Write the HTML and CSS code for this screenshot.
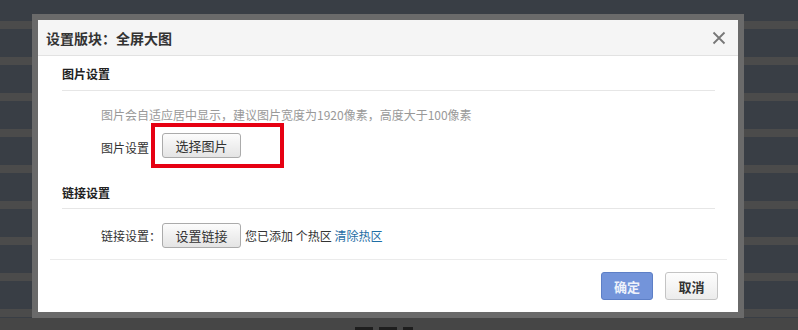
FILE: index.html
```html
<!DOCTYPE html>
<html lang="zh-CN">
<head>
    <meta charset="UTF-8">
    <meta name="viewport" content="width=device-width, initial-scale=1.0">
    <title>设置版块：全屏大图</title>
    <link rel="stylesheet" href="styles.css">
</head>
<body>
    <div class="frame">
        <div class="dialog">
            <div class="dlg-head">
                <span class="dlg-title">设置版块：全屏大图</span>
                <svg class="close" width="14" height="14" viewBox="0 0 14 14">
                    <path d="M1.5 1.5 L12.5 12.5 M12.5 1.5 L1.5 12.5" stroke="#777" stroke-width="1.8" fill="none"/>
                </svg>
            </div>

            <div class="section-title">图片设置</div>
            <div class="hint">图片会自适应居中显示，建议图片宽度为1920像素，高度大于100像素</div>
            <div class="row">
                <span class="label">图片设置</span>
                <span class="mark"><button class="btn">选择图片</button></span>
            </div>

            <div class="section-title second">链接设置</div>
            <div class="row row-link">
                <span class="label">链接设置：</span>
                <button class="btn">设置链接</button>
                <span class="note">您已添加 个热区 <a class="link" href="#">清除热区</a></span>
            </div>

            <div class="dlg-foot">
                <button class="btn-ok">确定</button>
                <button class="btn-cancel">取消</button>
            </div>
        </div>
    </div>
    <div class="bottom-band">
        <span class="peek"></span><span class="peek"></span><span class="peek small"></span>
    </div>
</body>
</html>
```

FILE: styles.css
```css
html {
    overflow: hidden;
}
body {
    margin: 0;
    width: 798px;
    height: 330px;
    overflow: hidden;
    font-family: "Noto Sans CJK SC", "Liberation Sans", sans-serif;
    font-size: 12px;
    color: #333;
    background-color: #393e45;
    background-image: repeating-linear-gradient(to bottom, transparent 0, transparent 21px, #4b4b4b 21px, #4b4b4b 29px, transparent 29px, transparent 36px);
    padding-top: 14px;
    box-sizing: border-box;
}
.frame {
    width: 700px;
    margin-left: 32px;
    border: 6px solid #6a6a6a;
}
.dialog {
    background-color: #fff;
    height: 292px;
}
.dlg-head {
    height: 35px;
    background-color: #f5f5f5;
    border-bottom: 1px solid #e2e2e2;
    display: flex;
    align-items: center;
    justify-content: space-between;
    padding: 0 12px 0 8px;
}
.dlg-title {
    font-size: 14px;
    font-weight: bold;
    color: #333;
    line-height: 20px;
}
.close {
    display: block;
    margin-top: 1px;
}
.section-title {
    margin: 6px 23px 0 24px;
    line-height: 24px;
    padding-bottom: 4px;
    font-weight: bold;
    color: #222;
    border-bottom: 1px solid #e6e6e6;
}
.section-title.second {
    margin-top: 23px;
    padding-bottom: 3px;
}
.hint {
    margin: 14px 0 0 63px;
    line-height: 20px;
    color: #999;
}
.row {
    display: flex;
    align-items: center;
    margin: 8px 0 0 63px;
    height: 25px;
}
.row-link {
    margin-top: 14px;
}
.label {
    width: 61px;
    line-height: 25px;
    padding-top: 3px;
}
.row-link .label {
    padding-top: 0;
}
.mark {
    position: relative;
    display: inline-block;
}
.mark::after {
    content: "";
    position: absolute;
    left: -11px;
    top: -10px;
    width: 125px;
    height: 37px;
    border: 4px solid #e60012;
}
.btn {
    width: 79px;
    height: 25px;
    border: 1px solid #ababab;
    border-radius: 3px;
    background: linear-gradient(to bottom, #fcfcfc, #e4e4e4);
    font-family: inherit;
    font-size: 13px;
    color: #333;
    padding: 0;
    cursor: pointer;
}
.note {
    margin-left: 4px;
    color: #333;
}
.link {
    color: #1f6ea5;
    text-decoration: none;
}
.dlg-foot {
    margin: 11px 11px 0 12px;
    border-top: 1px solid #ebebeb;
    padding: 12px 9px 0 0;
    display: flex;
    justify-content: flex-end;
    gap: 12px;
}
.btn-ok, .btn-cancel {
    height: 28px;
    border-radius: 3px;
    font-family: inherit;
    font-size: 13px;
    font-weight: bold;
    padding: 0;
    cursor: pointer;
}
.btn-ok {
    width: 52px;
    background-color: #7394da;
    border: 1px solid #5d7fc6;
    color: #eef2fb;
}
.btn-cancel {
    width: 53px;
    background: linear-gradient(to bottom, #fdfdfd, #ececec);
    border: 1px solid #c4c4c4;
    color: #333;
}
.bottom-band {
    height: 12px;
    background-color: #464646;
    overflow: hidden;
    display: flex;
    gap: 6px;
    padding: 9px 0 0 355px;
    box-sizing: border-box;
}
.peek {
    width: 18px;
    height: 3px;
    background-color: #1e1e1e;
}
.peek.small {
    width: 10px;
}
```
